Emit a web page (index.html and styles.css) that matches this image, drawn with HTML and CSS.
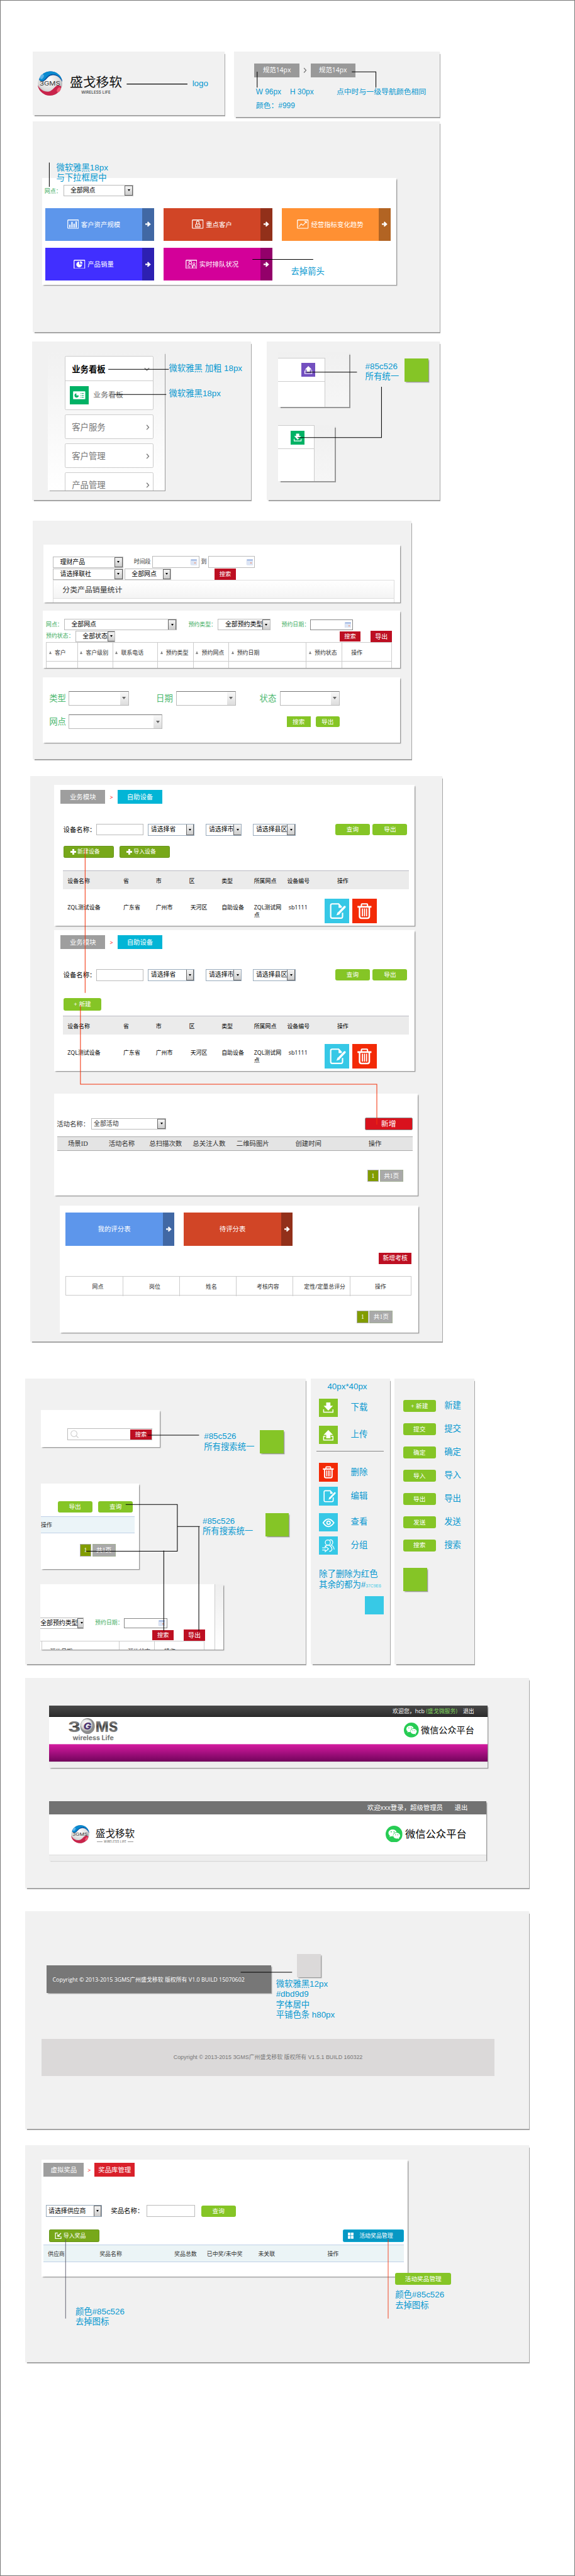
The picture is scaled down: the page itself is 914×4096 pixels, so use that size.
FILE: index.html
```html
<!DOCTYPE html>
<html lang="zh-CN">
<head>
<meta charset="utf-8">
<title>盛戈移软 界面规范</title>
<link rel="stylesheet" href="styles.css">
</head>
<body>
<svg class="defs" width="0" height="0" aria-hidden="true">
  <defs>
    <radialGradient id="silver" cx="45%" cy="35%" r="70%"><stop offset="0" stop-color="#fff"/><stop offset=".6" stop-color="#dcdcdc"/><stop offset="1" stop-color="#999"/></radialGradient>
    <linearGradient id="chrome" x1="0" y1="0" x2="0" y2="1"><stop offset="0" stop-color="#bbb"/><stop offset=".5" stop-color="#444"/><stop offset="1" stop-color="#aaa"/></linearGradient>
    <symbol id="ball" viewBox="0 0 53 53">
      <circle cx="26.5" cy="26.5" r="26" fill="url(#silver)"/>
      <path d="M3 18C9 2 24-2 36 2 46 6 52 14 53 24 48 14 40 8 31 9 19 10 18 24 8 22 5 22 3 20 3 18Z" fill="#0a4c9a"/>
      <path d="M3 17C9 2 24-2 36 2 45 5 50 12 52 20 46 10 38 5 29 7 18 9 16 22 8 21 4 21 3 19 3 17Z" fill="#0a8bd0"/>
      <ellipse cx="9" cy="12" rx="3.5" ry="5.5" transform="rotate(30 9 12)" fill="#5fb3e8"/>
      <path d="M50 35C44 51 29 55 17 51 7 47 1 39 0 30 5 40 14 45 23 44 34 42 36 30 45 31 49 31 51 33 50 35Z" fill="#c9244b"/>
      <ellipse cx="45" cy="40" rx="3.5" ry="5.500" transform="rotate(30 45 40)" fill="#ee5b73"/>
      <text x="26" y="31" text-anchor="middle" font-family="Inter, sans-serif" font-size="11.500" textLength="44" lengthAdjust="spacingAndGlyphs" fill="#333">3GMS</text>
    </symbol>
    <symbol id="arrow" viewBox="0 0 12 12"><path d="M0 4.500h5.500L3.800 2.200 5.800.4 11.800 6 5.800 11.600 3.800 9.800 5.500 7.500H0z" fill="#fff"/></symbol>
    <symbol id="right" viewBox="0 0 8 12"><path d="M1.500 1 6 6 1.500 11" fill="none" stroke="#777" stroke-width="1.800"/></symbol>
    <symbol id="down" viewBox="0 0 12 8"><path d="M1 1.500 6 6.500 11 1.500" fill="none" stroke="#777" stroke-width="1.800"/></symbol>
    <symbol id="bars" viewBox="0 0 25 20"><rect x="1" y="1" width="23" height="18" rx="1" fill="none" stroke="#fff" stroke-width="1.700"/><path d="M5.500 17V11M10 17V5M14.500 17V9M19 17V4" stroke="#fff" stroke-width="2.600"/></symbol>
    <symbol id="vip" viewBox="0 0 25 20"><rect x="1" y="1" width="23" height="18" rx="1" fill="none" stroke="#fff" stroke-width="1.700"/><path d="M8 16V11l2-1.500V6a2.700 2.700 0 0 1 5.400 0V9.500L17.500 11V16Z" fill="none" stroke="#fff" stroke-width="1.600"/><path d="M10 9.500h6M12.700 11v3" stroke="#fff" stroke-width="1.500"/></symbol>
    <symbol id="trend" viewBox="0 0 25 20"><rect x="1" y="1" width="23" height="18" rx="1" fill="none" stroke="#fff" stroke-width="1.700"/><path d="M4 15.500 9 9.500 13 12.500 20 4.500M16 4.500H20.500V8" fill="none" stroke="#fff" stroke-width="1.500"/></symbol>
    <symbol id="pie" viewBox="0 0 25 20"><rect x="1" y="1" width="23" height="18" rx="1" fill="none" stroke="#fff" stroke-width="1.700"/><path d="M12 4A6.200 6.200 0 1 0 18.200 10.200H12Z" fill="#fff"/><path d="M14 3V8.500H19A5.500 5.500 0 0 0 14 3Z" fill="#fff"/></symbol>
    <symbol id="queue" viewBox="0 0 25 20"><rect x="1" y="1" width="23" height="18" rx="1" fill="none" stroke="#fff" stroke-width="1.700"/><circle cx="10" cy="6" r="3" fill="none" stroke="#fff" stroke-width="1.400"/><circle cx="18" cy="8.500" r="2.200" fill="none" stroke="#fff" stroke-width="1.300"/><path d="M5.500 18V12L8.500 9.500M14 18V12L11.500 9.500M9 18V13M16 18V13L17.500 11 20.500 12.500V18" fill="none" stroke="#fff" stroke-width="1.400"/></symbol>
    <symbol id="download" viewBox="0 0 40 40"><path d="M15.500 8h9v7h5.500L20 25.500 10 15h5.500z" fill="#fff"/><path d="M10 23V29H30V23" fill="none" stroke="#fff" stroke-width="2"/></symbol>
    <symbol id="upload" viewBox="0 0 40 40"><path d="M15.500 27h9V19.500H30L20 9 10 19.500h5.500z" fill="#fff"/><path d="M14 23H10V30.500H30V23H26" fill="none" stroke="#fff" stroke-width="2"/></symbol>
    <symbol id="trash" viewBox="0 0 40 40"><path d="M15 13V9.500Q15 8.500 16 8.500H24Q25 8.500 25 9.500V13" fill="none" stroke="#fff" stroke-width="2.200"/><path d="M8.500 13.300H31.500" stroke="#fff" stroke-width="2.800"/><path d="M12 14V29Q12 32 15 32H25Q28 32 28 29V14" fill="none" stroke="#fff" stroke-width="2.600"/><path d="M16.500 16V29M20 16V29M23.500 16V29" stroke="#fff" stroke-width="2"/></symbol>
    <symbol id="edit" viewBox="0 0 40 40"><path d="M30.500 23V29Q30.500 32 28 32H13.500Q11 32 11 29V11Q11 8.500 13.500 8.500H24L29 14" fill="none" stroke="#fff" stroke-width="2.200"/><path d="M24 8.500V15H29.500z" fill="#fff"/><path d="M34 13.500 24.500 23.500" stroke="#fff" stroke-width="3.600" stroke-linecap="round"/><path d="M22.500 22 26 25.500 20.500 27.500z" fill="#fff"/></symbol>
    <symbol id="eye" viewBox="0 0 40 40"><path d="M9 20.500Q20 4.500 32 20.500 20 37 9 20.500Z" fill="none" stroke="#fff" stroke-width="2.400"/><circle cx="20.500" cy="20.500" r="3.600" fill="none" stroke="#fff" stroke-width="2.400"/></symbol>
    <symbol id="group" viewBox="0 0 40 40"><circle cx="19" cy="13" r="5.500" fill="none" stroke="#fff" stroke-width="1.700"/><path d="M23 7.500C30 6 32 15 26 18.500 30 20 32 23 32.500 28M13 22Q15 18.500 19 18.500 27 19.500 28 28M22 31.500Q25 33 28 28M7 24.500H13.500V21L20.500 26.500 13.500 32.500V29H7" fill="none" stroke="#fff" stroke-width="1.700"/></symbol>
    <symbol id="board" viewBox="0 0 40 40"><rect x="7" y="11" width="26" height="17" rx="1" fill="#fff"/><path d="M14 15.500A4.500 4.500 0 1 0 19 20H14Z" fill="#00b265"/><path d="M23 15.500H30M23 19.500H30M23 23.500H30" stroke="#00b265" stroke-width="1.500" stroke-dasharray="1.500 1 6"/></symbol>
    <symbol id="calendar" viewBox="0 0 14 13"><rect x=".5" y=".5" width="13" height="12" rx="1" fill="#eef2fb" stroke="#b9c8e6"/><rect x="1" y="1" width="12" height="2.500" fill="#9db6e2"/><path d="M4 4v8M7 4v8M10 4v8M1 6.500h12M1 9.500h12" stroke="#c5d2ec" stroke-width=".7"/><rect x="8" y="7" width="3" height="2.500" fill="#eca38c"/></symbol>
    <symbol id="wechat" viewBox="0 0 36 36"><circle cx="18" cy="18" r="18" fill="#27cc54"/><path d="M15 8C9.500 8 6 11.500 6 15.500 6 18 7.200 20 9.200 21.300L8.300 24.200 11.700 22.500 15 23 16 22C15 17.500 18.500 13.800 23.500 14 22.800 10.300 19.300 8 15 8Z" fill="#fff"/><path d="M23.500 15C19 15 16.300 18 16.300 21.200 16.300 24.800 19.500 27.500 23.500 27.500L26 27.200 28.800 28.600 28.100 26.100C30 25 31 23.200 31 21.200 31 18 28 15 23.500 15Z" fill="#fff"/><g fill="#27cc54"><circle cx="12" cy="13" r="1.200"/><circle cx="18" cy="13" r="1.200"/><circle cx="21.300" cy="19.500" r="1"/><circle cx="26" cy="19.500" r="1"/></g></symbol>
  </defs>
</svg>

<main class="page">

  <div class="band">
    <section class="panel p-logo">
      <div class="brand">
        <svg class="brand-ball"><use href="#ball"/></svg>
        <div class="brand-words"><b>盛戈移软</b><span>WIRELESS LIFE</span></div>
      </div>
      <svg class="leaders" viewBox="70 110 410 136"><path d="M271 179.500H401"/></svg>
      <p class="note n-logo">logo</p>
    </section>
    <section class="panel p-crumb">
      <div class="spec-crumbs"><span>规范14px</span><svg><use href="#right"/></svg><span>规范14px</span></div>
      <div class="spec-notes"><p>W 96px</p><p>H 30px</p><p>点中时与一级导航颜色相同</p><p>颜色：#999</p></div>
      <svg class="leaders" viewBox="500 110 440 140"><path d="M549.500 153V187M752 153.500H803.500V187"/></svg>
    </section>
  </div>

  <section class="panel p-tiles">
    <div class="card c-tiles">
      <div class="tile-filter"><label class="green">网点：</label><div class="select pad25">全部网点<i></i></div></div>
      <div class="tiles">
        <a class="tile blue"><span><svg><use href="#bars"/></svg>客户资产规模</span><em><svg><use href="#arrow"/></svg></em></a>
        <a class="tile red"><span><svg><use href="#vip"/></svg>重点客户</span><em><svg><use href="#arrow"/></svg></em></a>
        <a class="tile orange"><span><svg><use href="#trend"/></svg>经营指标变化趋势</span><em><svg><use href="#arrow"/></svg></em></a>
        <a class="tile indigo"><span><svg><use href="#pie"/></svg>产品销量</span><em><svg><use href="#arrow"/></svg></em></a>
        <a class="tile magenta"><span><svg><use href="#queue"/></svg>实时排队状况</span><em><svg><use href="#arrow"/></svg></em></a>
      </div>
    </div>
    <svg class="leaders" viewBox="70 260 870 450"><path d="M105.500 348V400M540 555.500H670"/></svg>
    <p class="note n-font">微软雅黑18px<br>与下拉框居中</p>
    <p class="note n-arrow">去掉箭头</p>
  </section>

  <div class="band band-menu">
    <section class="panel p-menu">
      <div class="menu-card">
        <div class="menu-group">
          <div class="menu-item open">业务看板<svg class="chev-down"><use href="#down"/></svg></div>
          <div class="menu-sub"><svg><use href="#board"/></svg>业务看板</div>
        </div>
        <div class="menu-group menu-item">客户服务<svg><use href="#right"/></svg></div>
        <div class="menu-group menu-item">客户管理<svg><use href="#right"/></svg></div>
        <div class="menu-group menu-item">产品管理<svg><use href="#right"/></svg></div>
      </div>
      <svg class="leaders" viewBox="68 730 468 340"><path d="M231 789.500H360.500M244 843.500H355"/></svg>
      <p class="note n-bold">微软雅黑 加粗 18px</p>
      <p class="note n-regular">微软雅黑18px</p>
    </section>
    <section class="panel p-io">
      <div class="corner corner-up"><div class="sheet"><div class="sheet-top"><svg class="purple"><use href="#upload"/></svg></div></div></div>
      <div class="corner corner-down"><div class="sheet"><div class="sheet-top"><svg class="emerald"><use href="#download"/></svg></div></div></div>
      <svg class="leaders" viewBox="570 730 370 340"><path d="M655 795.500H763M636 935.500H815.500V827"/></svg>
      <p class="note n-io">#85c526<br>所有统一</p>
      <div class="swatch s-io"></div>
    </section>
  </div>

  <section class="panel p-filters">
    <div class="card f1">
      <div class="grid f1-a"><div class="select pad15">理财产品<i></i></div><span>时间段</span><div class="date"><svg><use href="#calendar"/></svg></div><span>到</span><div class="date"><svg><use href="#calendar"/></svg></div></div>
      <div class="grid f1-b"><div class="select pad15">请选择联社<i></i></div><div class="select pad15">全部网点<i></i></div><a class="btn-red">搜索</a></div>
      <div class="strip">分类产品销量统计</div>
      <div class="strip-next"></div>
    </div>
    <div class="card f2">
      <div class="grid f2-a"><label class="green">网点：</label><div class="select pad15">全部网点<i></i></div><label class="green">预约类型：</label><div class="select pad15">全部预约类型<i></i></div><label class="green">预约日期：</label><div class="date dark"><svg><use href="#calendar"/></svg></div></div>
      <div class="grid f2-b"><label class="green">预约状态：</label><div class="select pad15">全部状态<i></i></div><a class="btn-red small">搜索</a><a class="btn-red big">导出</a></div>
      <div class="cells sort"><span>客户</span><span>客户级别</span><span>联系电话</span><span>预约类型</span><span>预约网点</span><span>预约日期</span><span>预约状态</span><span class="plain">操作</span></div>
      <div class="cells empty"><span></span><span></span><span></span><span></span><span></span><span></span><span></span><span></span></div>
    </div>
    <div class="card f3">
      <div class="grid f3-a"><label>类型</label><div class="combo"><i></i></div><label>日期</label><div class="combo"><i></i></div><label>状态</label><div class="combo"><i></i></div></div>
      <div class="grid f3-b"><label>网点</label><div class="combo wide"><i></i></div><a class="btn square">搜索</a><a class="btn">导出</a></div>
    </div>
  </section>

  <section class="panel p-device">
    <div class="card device">
      <div class="crumbs"><span>业务模块</span><b>&gt;</b><span class="cyan">自助设备</span></div>
      <div class="grid dev-filter"><label>设备名称：</label><div class="input"></div><div class="select s1">请选择省<i></i></div><div class="select s2">请选择市<i></i></div><div class="select s3">请选择县区<i></i></div><a class="btn">查询</a><a class="btn">导出</a></div>
      <div class="dark-actions"><a><b></b>新建设备</a><a><b></b>导入设备</a></div>
      <div class="dev-head"><span>设备名称</span><span>省</span><span>市</span><span>区</span><span>类型</span><span>所属网点</span><span>设备编号</span><span class="op">操作</span></div>
      <div class="dev-row"><span>ZQL测试设备</span><span>广东省</span><span>广州市</span><span class="in">天河区</span><span>自助设备</span><span>ZQL测试网<br>点</span><span class="in">sb1111</span><div class="ops"><svg class="sky" viewBox="4 0 34 40"><use href="#edit" width="40" height="40"/></svg><svg class="scarlet" viewBox="3 0 34 40"><use href="#trash" width="40" height="40"/></svg></div></div>
    </div>
    <div class="card device second">
      <div class="crumbs"><span>业务模块</span><b>&gt;</b><span class="cyan">自助设备</span></div>
      <div class="grid dev-filter"><label>设备名称：</label><div class="input"></div><div class="select s1">请选择省<i></i></div><div class="select s2">请选择市<i></i></div><div class="select s3">请选择县区<i></i></div><a class="btn">查询</a><a class="btn">导出</a></div>
      <a class="btn new">+ 新建</a>
      <div class="dev-head"><span>设备名称</span><span>省</span><span>市</span><span>区</span><span>类型</span><span>所属网点</span><span>设备编号</span><span class="op">操作</span></div>
      <div class="dev-row"><span>ZQL测试设备</span><span>广东省</span><span>广州市</span><span class="in">天河区</span><span>自助设备</span><span>ZQL测试网<br>点</span><span class="in">sb1111</span><div class="ops"><svg class="sky" viewBox="4 0 34 40"><use href="#edit" width="40" height="40"/></svg><svg class="scarlet" viewBox="3 0 34 40"><use href="#trash" width="40" height="40"/></svg></div></div>
    </div>
    <div class="card activity">
      <div class="grid act-filter"><label>活动名称：</label><div class="select pad5">全部活动<i></i></div><a class="btn-add">新增</a></div>
      <div class="act-head"><span>场景ID</span><span>活动名称</span><span>总扫描次数</span><span>总关注人数</span><span>二维码图片</span><span>创建时间</span><span>操作</span></div>
      <div class="pager"><b>1</b><span>共1页</span></div>
    </div>
    <div class="card score">
      <div class="tiles two">
        <a class="tile blue"><span>我的评分表</span><em><svg><use href="#arrow"/></svg></em></a>
        <a class="tile red"><span>待评分表</span><em><svg><use href="#arrow"/></svg></em></a>
      </div>
      <a class="btn-red review">新增考核</a>
      <div class="score-table"><span>网点</span><span>岗位</span><span>姓名</span><span>考核内容</span><span>定性/定量总评分</span><span>操作</span></div>
      <div class="pager"><b>1</b><span>共1页</span></div>
    </div>
    <svg class="leaders hot" viewBox="64 1660 882 1210"><path d="M181.500 1817V2124M171.500 2150V2319.500H805.500V2406"/></svg>
  </section>

  <div class="band band-buttons">
    <section class="panel p-search">
      <div class="card h1"><div class="searchbox"><svg viewBox="0 0 18 18"><circle cx="7.500" cy="7.500" r="6.500"/><path d="M12 12 17 16.500"/></svg><a class="btn-red">搜索</a></div></div>
      <div class="card h2">
        <div class="h2-buttons"><a class="btn">导出</a><a class="btn">查询</a></div>
        <div class="h2-head">操作</div>
        <div class="pager"><b>1</b><span>共1页</span></div>
      </div>
      <div class="card h3"><div class="h3-sheet">
        <div class="grid h3-a"><div class="select">全部预约类型<i></i></div><label class="green">预约日期：</label><div class="date dark"><svg><use href="#calendar"/></svg></div></div>
        <div class="h3-b"><a class="btn-red">搜索</a><a class="btn-red big">导出</a></div>
        <div class="h3-cells"><span></span><span class="tri">预约日期</span><span class="tri">预约状态</span><span>操作</span></div>
      </div></div>
      <svg class="leaders" viewBox="54 2950 600 610"><path d="M316 3071H426M269 3219.500H379.500V3319.500H184M379.500 3266.500H427.500M425.500 3266V3490M350.500 3318V3490"/></svg>
      <p class="note n-s1">#85c526<br>所有搜索统一</p>
      <div class="swatch s-s1"></div>
      <p class="note n-s2">#85c526<br>所有搜索统一</p>
      <div class="swatch s-s2"></div>
    </section>
    <section class="panel p-icons">
      <p class="size">40px*40px</p>
      <div class="icon-row"><svg class="lime"><use href="#download"/></svg>下载</div>
      <div class="icon-row r2"><svg class="lime"><use href="#upload"/></svg>上传</div>
      <hr>
      <div class="icon-row"><svg class="scarlet"><use href="#trash"/></svg>删除</div>
      <div class="icon-row r4"><svg class="sky"><use href="#edit"/></svg>编辑</div>
      <div class="icon-row r5"><svg class="sky"><use href="#eye"/></svg>查看</div>
      <div class="icon-row r6"><svg class="sky"><use href="#group"/></svg>分组</div>
      <p class="rule">除了删除为红色<br>其余的都为#<small>37C9E6</small></p>
      <div class="sky-box"></div>
    </section>
    <section class="panel p-actions">
      <div class="action"><a class="btn">+ 新建</a>新建</div>
      <div class="action"><a class="btn">提交</a>提交</div>
      <div class="action"><a class="btn">确定</a>确定</div>
      <div class="action"><a class="btn">导入</a>导入</div>
      <div class="action"><a class="btn">导出</a>导出</div>
      <div class="action"><a class="btn">发送</a>发送</div>
      <div class="action"><a class="btn">搜索</a>搜索</div>
      <div class="swatch flow"></div>
    </section>
  </div>

  <section class="panel p-headers">
    <div class="card k1">
      <div class="k1-bar"><span>欢迎您，hcb <em>(盛戈微服务)</em></span><span>退出</span></div>
      <div class="k1-main">
        <svg class="old-logo" viewBox="0 0 107 50"><g font-family="Inter, sans-serif" font-weight="800"><ellipse cx="42" cy="17" rx="15.500" ry="17" fill="#8d8d8d"/><ellipse cx="40" cy="15" rx="12.500" ry="13" fill="url(#silver)"/><text x="0" y="29" font-size="30" textLength="27" lengthAdjust="spacingAndGlyphs" fill="url(#chrome)">3</text><text x="59" y="29" font-size="30" textLength="48" lengthAdjust="spacingAndGlyphs" fill="url(#chrome)">MS</text><text x="33" y="24" font-style="italic" font-size="20" textLength="17" lengthAdjust="spacingAndGlyphs" fill="#4b3470">G</text><text x="10" y="47" font-weight="700" font-size="14" textLength="88" lengthAdjust="spacingAndGlyphs" fill="#777">wireless Life</text></g></svg>
        <div class="wechat"><svg><use href="#wechat"/></svg>微信公众平台</div>
      </div>
      <div class="k1-nav"></div>
      <div class="k-foot"></div>
    </div>
    <div class="card k2">
      <div class="k2-bar"><span>欢迎xxx登录，超级管理员</span><span>退出</span></div>
      <div class="k2-main">
        <div class="brand mini"><svg class="brand-ball"><use href="#ball"/></svg><div class="brand-words"><b>盛戈移软</b><span>WIRELESS LIFE</span></div></div>
        <div class="wechat"><svg><use href="#wechat"/></svg>微信公众平台</div>
      </div>
      <div class="k-foot"></div>
    </div>
  </section>

  <section class="panel p-footer">
    <div class="foot-row"><div class="foot-old">Copyright © 2013-2015 3GMS广州盛戈移软 版权所有 V1.0 BUILD 15070602</div><div class="foot-swatch"></div></div>
    <div class="foot-new">Copyright © 2013-2015 3GMS广州盛戈移软 版权所有 V1.5.1 BUILD 160322</div>
    <svg class="leaders" viewBox="54 4090 1077 465"><path d="M515 4220.500H625"/></svg>
    <p class="note n-foot">微软雅黑12px<br>#dbd9d9<br>字体居中<br>平铺色条 h80px</p>
  </section>

  <section class="panel p-prize">
    <div class="card prize">
      <div class="crumbs"><span>虚拟奖品</span><b>&gt;</b><span class="crimson">奖品库管理</span></div>
      <div class="grid prize-filter"><div class="select pad5">请选择供应商<i></i></div><label>奖品名称：</label><div class="input"></div><a class="btn">查询</a></div>
      <div class="prize-actions">
        <a class="import"><svg viewBox="0 0 14 14"><path d="M6 1H1V13H13V8M13 1 6 8M6 3.500V8H11"/></svg>导入奖品</a>
        <a class="manage"><svg viewBox="0 0 12 13"><path d="M0 0H5.500V6H0zM6.500 0H12V6H6.500zM0 7H5.500V13H0zM6.500 7H12V13H6.500z"/></svg>活动奖品管理</a>
      </div>
      <div class="prize-head"><span>供应商</span><span>奖品名称</span><span>奖品总数</span><span>已中奖/未中奖</span><span>未关联</span><span>操作</span></div>
    </div>
    <svg class="leaders thin" viewBox="54 4590 1077 465"><path d="M140.500 4791V4961"/><path class="hot-line" d="M830.500 4791V4961"/></svg>
    <a class="btn float-btn">活动奖品管理</a>
    <p class="note n-p1">颜色#85c526<br>去掉图标</p>
    <p class="note n-p2">颜色#85c526<br>去掉图标</p>
  </section>
</main>
</body>
</html>
```
FILE: styles.css
```css
* { box-sizing: border-box; }
html, body { margin: 0; background: #fff; }
body { overflow-x: hidden; }
p { margin: 0; }
.defs { position: absolute; }

/* The board is authored on a 1230px canvas and shown at reduced scale. */
.page {
  zoom: 0.7431;
  width: 1230px;
  height: 5512px;
  border: 1px solid #777;
  padding-top: 109px;
  font: 12px/1 "Open Sans", "Noto Sans CJK SC", sans-serif;
  color: #333;
  white-space: nowrap;
  overflow: hidden;
}
.page svg { display: block; flex: none; }

/* ---------- shared ---------- */
.band { display: flex; align-items: flex-start; }
.panel { position: relative; background: #f1f1f1; box-shadow: 2px 3px 1px #a5a5a5; display: flow-root; }
.card { background: #fff; box-shadow: 3px 3px 2px #999; display: flow-root; }
.grid { display: grid; align-items: center; justify-items: start; }
.leaders { position: absolute; inset: 0; width: 100%; height: 100%; fill: none; stroke: #000; stroke-width: 1.400; pointer-events: none; }
.leaders.hot, .hot-line { stroke: #f3330c; }
.leaders.thin { stroke-width: 1.200; }
.leaders.thin path:first-child { stroke: #556; }
.note, .size, .rule, .spec-notes, .icon-row, .action {
  font-family: "Liberation Sans", "Noto Sans CJK SC", sans-serif;
  font-size: 18px; line-height: 22px; color: #0798d0;
}
.note { position: absolute; }
.swatch { position: absolute; width: 51px; height: 50px; background: #85c526; box-shadow: 3px 3px 2px #999; }
.swatch.flow { position: static; }
.green { color: #3fae63; }

.select { position: relative; display: flex; align-items: center; justify-content: space-between; height: 24px; border: 1px solid #bbb; background: #fff; color: #000; font-size: 13.300px; padding-left: 5px; overflow: hidden; }
.select i { flex: none; width: 17px; height: 22px; border: 1px solid #666; background: linear-gradient(#f4f4f4, #ccc); display: grid; place-items: center; }
.select i::after { content: ""; border: 4px solid transparent; border-top: 5px solid #000; border-bottom: 0; }
.pad15 { padding-left: 14px; }
.pad25 { padding-left: 14px; }
.pad5 { padding-left: 4px; }
.date, .input { border: 1px solid #bbb; background: #fff; height: 25px; width: 100px; }
.date { display: flex; align-items: center; justify-content: flex-end; padding-right: 3px; }
.date svg { width: 14px; height: 13px; }
.date.dark { border-color: #888; width: 92px; height: 22px; }
.btn { display: grid; place-items: center; height: 24px; width: 74px; border-radius: 4px; background: #85c526; color: #fff; font-size: 13px; }
.btn-red { display: grid; place-items: center; width: 45px; height: 24px; background: #bd0f22; color: #fff; font-size: 12.500px; }
.crumbs { display: flex; font-size: 14px; color: #fff; }
.crumbs span { width: 96px; height: 30px; display: grid; place-items: center; background: #9e9e9e; }
.crumbs b { width: 26px; font: 12px/32px "Open Sans", sans-serif; color: #f00; text-align: center; }
.crumbs .cyan { background: #02b5d6; }
.crumbs .crimson { background: #d9202a; }
.pager { display: flex; gap: 2px; height: 26px; color: #fff; font: 13px/24px "Liberation Serif", "Noto Sans CJK SC", serif; text-align: center; }
.pager b { width: 25px; background: #819c00; border: 1px solid #aaa; font-weight: 400; }
.pager span { width: 50px; background: #a9a9a9; border: 1px solid #a3af96; }
.lime { background: #85c526; }
.sky { background: #36c8e6; }
.scarlet { background: #f32a06; }

/* ---------- logo / breadcrumb spec ---------- */
.p-logo { width: 410px; height: 136px; margin-left: 69px; }
.p-crumb { width: 440px; height: 140px; margin-left: 20px; }
.brand { display: flex; margin: 42px 0 0 10px; }
.brand-ball { width: 53px; height: 53px; }
.brand-words { margin-left: 15px; width: 114px; display: flex; flex-direction: column; align-items: center; color: #111; }
.brand-words b { font-size: 28px; line-height: 30px; margin-top: 8px; font-weight: 400; }
.brand-words span { font: 8.500px/10px Inter, sans-serif; letter-spacing: .1px; margin: 3px 0 0 0; }
.n-logo { left: 341px; top: 58px; }
.spec-crumbs { display: flex; align-items: center; margin: 25px 0 0 44px; }
.spec-crumbs span { width: 96px; height: 30px; display: grid; place-items: center; background: #999; color: #fff; font-size: 14px; }
.spec-crumbs svg { width: 8px; height: 13px; margin: 0 8px; }
.spec-notes { display: grid; grid-template-columns: 73px 99.500px auto; row-gap: 7px; margin: 21px 0 0 47px; font-size: 16px; }

/* ---------- tiles ---------- */
.p-tiles { width: 870px; height: 450px; margin: 10px 0 0 69px; }
.c-tiles { width: 757px; height: 229px; margin: 120px 0 0 20px; }
.tile-filter { display: flex; align-items: center; margin: 15px 0 0 5px; }
.tile-filter label { width: 40px; padding-top: 4px; }
.tile-filter .select { width: 150px; }
.tiles { display: grid; grid-template-columns: repeat(3, 233px); gap: 15px 20px; margin: 26px 0 0 6px; }
.tile { height: 70px; display: flex; color: #fff; font-size: 14px; }
.tile span { flex: 1; display: flex; align-items: center; justify-content: center; gap: 5px; }
.tile span svg { width: 25px; height: 20px; }
.tile em { width: 25px; display: grid; place-items: center; background: rgba(0, 0, 0, .3); }
.tile em svg { width: 12px; height: 12px; }
.blue { background: #5d96eb; }
.red { background: #d14526; }
.orange { background: #ff9033; }
.indigo { background: #412fff; }
.magenta { background: #d30099; }
.n-font { left: 50px; top: 88px; }
.n-arrow { left: 552px; top: 310px; }

/* ---------- side menu / upload ---------- */
.band-menu { margin-top: 20px; }
.p-menu { width: 468px; height: 340px; margin-left: 67px; }
.p-io { width: 370px; height: 340px; margin-left: 34px; }
.menu-card { width: 250px; height: 296px; margin: 23px 0 0 34px; padding: 9px 0 0 36px; overflow: hidden; background: linear-gradient(#f1f1f1, #fff); box-shadow: 2px 2px 1px #999; }
.menu-group { width: 190px; margin-bottom: 10px; border: 1px solid #ccc; border-radius: 3px; background: #fff; }
.menu-item { height: 52px; display: flex; align-items: center; justify-content: space-between; padding: 3px 7px 0 14px; font-size: 18px; color: #777; }
.menu-item svg { width: 8px; height: 12px; }
.menu-item .chev-down { width: 12px; height: 8px; }
.menu-item.open { font-weight: 700; color: #000; border-bottom: 1px solid #ccc; }
.menu-sub { display: flex; align-items: center; height: 60px; padding-left: 10px; gap: 10px; font-size: 16px; color: #666; }
.menu-sub svg { width: 40px; height: 40px; background: #00b265; }
.n-bold { left: 293px; top: 47px; }
.n-regular { left: 293px; top: 101px; }
.corner { margin-left: 24px; background: linear-gradient(#f0f0f0, #f6f6f6); box-shadow: 3px 3px 1px #999; display: flow-root; overflow: hidden; }
.corner-up { width: 153px; height: 117px; margin-top: 23px; }
.corner-down { width: 121px; height: 119px; margin-top: 40px; }
.sheet { background: #fff; border: solid #ccc; border-width: 1px 1px 0 0; width: 78px; height: 119px; }
.corner-up .sheet { margin-top: 13px; width: 101px; border-top-width: 2px; }
.sheet-top { height: 49px; border-bottom: 1px solid #ccc; padding: 10px 0 0 27px; }
.corner-up .sheet-top { padding: 9px 0 0 50px; }
.sheet-top svg { width: 30px; height: 30px; }
.purple { background: #7350c0; }
.emerald { background: #00b265; }
.n-io { left: 211px; top: 43px; }
.s-io { left: 295px; top: 37px; }

/* ---------- filter forms ---------- */
.p-filters { width: 810px; height: 510px; margin: 44px 0 0 69px; }
.f1 { width: 762px; height: 124px; margin: 51px 0 0 23px; }
.f1-a, .f1-b { margin-left: 20px; height: 24px; }
.f1-a { grid-template-columns: 173px 40px 103.500px 15.500px 100px; margin-top: 25px; }
.f1-a .select, .f1-b .select:first-child { width: 150px; }
.f1-b { grid-template-columns: 153px 193px 45px; margin-top: 2px; }
.f1-b .select { width: 100px; }
.strip { margin: 0 0 0 20px; width: 731px; height: 41px; border: 1px solid #ddd; background: linear-gradient(#fff, #f4f4f4); padding-left: 19px; font-size: 16px; line-height: 40px; }
.strip-next { margin-left: 20px; width: 731px; height: 8px; border: solid #ddd; border-width: 0 1px; }
.f2 { width: 764px; height: 122px; margin: 18px 0 0 21px; }
.f2-a, .f2-b { margin-left: 7px; height: 25px; }
.f2-a { grid-template-columns: 39px 265.700px 63.300px 136px 61px 92px; margin-top: 17px; }
.f2-a .select { width: 241px; }
.f2-a label + .select:nth-child(4) { width: 113px; }
.f2-b { grid-template-columns: 63px 565px 67px 45px; }
.f2-b .select { width: 85px; }
.small { height: 22px; }
.big { height: 25px; font-size: 13.500px; }
.cells { display: grid; grid-template-columns: 66.600px 75.400px 96px 76.500px 75.500px 166px 76.600px 107.400px; margin-left: 7px; width: 740px; height: 42px; border: 1px solid #ccc; border-left: 0; line-height: 42px; }
.cells span { border-left: 1px solid #ccc; display: flex; align-items: center; gap: 7px; padding-left: 5px; }
.sort span::before { content: ""; border: 4px solid transparent; border-bottom: 7px solid #888; border-top: 0; }
.sort .plain::before { display: none; }
.sort .plain { padding-left: 19px; }
.empty { height: 13px; border-width: 0 1px 0 0; }
.f3 { width: 764px; height: 140px; margin: 20px 0 0 21px; }
.f3 label { font-size: 18px; color: #4db870; }
.f3-a, .f3-b { margin-left: 14px; height: 30px; }
.f3-a { grid-template-columns: 42px 186.600px 42.400px 179px 43px 128px; margin-top: 30px; }
.f3-b { grid-template-columns: 42px 466px 62px 51px; margin-top: 20px; }
.f3 .btn { width: 51px; height: 22px; }
.f3 .square { border-radius: 0; }
.combo { width: 128px; height: 30px; border: 1px solid #bbb; border-top: 2px solid #777; display: flex; justify-content: flex-end; }
.combo.wide { width: 200px; }
.combo i { width: 17px; background: linear-gradient(#f9f9f9, #ddd); display: grid; place-items: center; }
.combo i::after { content: ""; border: 5px solid transparent; border-top: 6px solid #666; border-bottom: 0; }

/* ---------- device management ---------- */
.p-device { width: 882px; height: 1210px; margin: 36px 0 0 63px; }
.device { width: 770px; height: 301px; margin: 19px 0 0 52px; color: #000; }
.device.second { margin-top: 10px; }
.device .crumbs { margin: 11px 0 0 13px; }
.dev-filter { grid-template-columns: 71px 110px 124px 101px 176px 80px 74px; margin: 40px 0 0 19px; height: 25px; }
.dev-filter label { font-size: 14px; }
.dev-filter .select { height: 26px; font-size: 13.300px; border-color: #9ab; }
.dev-filter .select i { height: 24px; }
.s1 { width: 100px; }
.s2 { width: 77px; }
.s3 { width: 91px; }
.dark-actions { display: flex; gap: 12px; margin: 23px 0 0 19px; }
.dark-actions a { width: 108px; height: 26px; border: 1px solid #66951a; border-radius: 3px; background: #77a81a; color: #fff; display: flex; align-items: center; gap: 3px; padding-left: 14px; }
.dark-actions b { width: 12px; height: 12px; background: linear-gradient(#fff, #fff) center / 4px 12px no-repeat, linear-gradient(#fff, #fff) center / 12px 4px no-repeat; }
.btn.new { width: 80px; height: 26px; margin: 38px 0 0 20px; }
.dev-head, .dev-row { display: grid; grid-template-columns: 119.600px 69.400px 71px 69.700px 69.300px 71px 80px auto; margin-left: 18px; width: 740px; padding-left: 10px; }
.dev-head { height: 41px; margin-top: 26px; border-top: 1px solid #bbbbc4; background: #ebebeb; line-height: 43px; }
.second .dev-head { margin-top: 11px; }
.dev-head .op { padding-left: 27px; }
.dev-row { line-height: 17px; padding-top: 30px; height: 79px; }
.dev-row .in { padding-left: 3px; }
.ops { display: flex; gap: 8px; margin-top: -10px; }
.ops svg { width: 52px; height: 52px; }
.activity { width: 777px; height: 218px; margin: 49px 0 0 52px; }
.act-filter { grid-template-columns: 74px 585px 102px; margin: 51px 0 0 5px; height: 27px; font-size: 14px; }
.act-filter .select { width: 160px; color: #333; }
.btn-add { width: 102px; height: 27px; background: #d9121d; border: 1px solid #888; border-radius: 3px; display: grid; place-items: center; color: #fff; font-size: 16px; }
.act-head { display: grid; grid-template-columns: 87px 87px 93px 93.500px 126px 156.500px auto; margin: 13px 0 0 6px; padding-left: 23px; width: 760px; height: 32px; border: solid #aaa; border-width: 1px 0; background: #e4e4e4; font: 14px/30px "Liberation Serif", "Noto Sans CJK SC", serif; }
.activity .pager { margin: 40px 0 0 669px; }
.score { width: 766px; height: 271px; margin: 22px 0 0 64px; }
.two { grid-template-columns: 233px 233px; margin: 15px 0 0 12px; }
.review { width: 70px; height: 25px; margin: 15px 0 0 682px; font-size: 13.300px; }
.score-table { display: grid; grid-template-columns: 121px 121.500px 120.500px 121.600px 121.400px auto; margin: 25px 0 0 12px; width: 740px; height: 42px; border: 1px solid #ccc; line-height: 42px; text-align: center; }
.score-table span { padding-left: 14px; }
.score-table span + span { border-left: 1px solid #ccc; }
.score-table span:last-child { padding-left: 0; }
.score .pager { margin: 33px 0 0 635px; }

/* ---------- search / icon / action buttons ---------- */
.band-buttons { margin-top: 80px; }
.p-search { width: 600px; height: 610px; margin-left: 53px; }
.p-icons { width: 170px; height: 610px; margin-left: 10px; }
.p-actions { width: 170px; height: 610px; margin-left: 10px; padding-top: 45px; }
.h1 { width: 254px; height: 79px; margin: 67px 0 0 33px; }
.searchbox { width: 182px; height: 26px; margin: 39px 0 0 57px; border: 1px solid #bbb; display: flex; align-items: center; justify-content: space-between; padding: 0 1px 0 5px; }
.searchbox svg { width: 18px; height: 18px; fill: none; stroke: #ccc; stroke-width: 1.400; }
.searchbox .btn-red { height: 22px; }
.h2 { width: 210px; height: 184px; margin: 78px 0 0 33px; }
.h2-buttons { display: flex; gap: 13px; margin: 38px 0 0 36px; }
.h2-head { width: 200px; height: 37px; margin-top: 8px; border: solid #bfd0e8; border-width: 1px 0; background: #ebf4f8; line-height: 36px; }
.h2 .pager { margin: 23px 0 0 83px; }
.h3 { width: 392px; height: 140px; margin: 32px 0 0 32px; background: linear-gradient(#eee, #fff); }
.h3-sheet { width: 374px; height: 140px; background: #fff; border-right: 2px solid #ccc; overflow: hidden; display: flow-root; }
.h3-a { grid-template-columns: 117px 62px 92px; margin-top: 71px; height: 24px; }
.h3-a .select { width: 93px; padding-left: 0; border-left: 0; }
.h3-b { display: flex; gap: 22px; margin: 1px 0 0 240px; height: 25px; align-items: center; }
.h3-b .btn-red { height: 22px; }
.h3-b .big { height: 25px; }
.h3-cells { display: grid; grid-template-columns: 2px 166.500px 75px 107px; width: 351px; height: 42px; border-top: 1px solid #ccc; border-right: 1px solid #ccc; line-height: 42px; }
.h3-cells span + span { border-left: 1px solid #ccc; padding-left: 20px; }
.h3-cells .tri::before { content: ""; display: inline-block; margin: 0 7px 1px -15px; border: 4px solid transparent; border-bottom: 7px solid #888; border-top: 0; }
.n-s1 { left: 382px; top: 113px; }
.s-s1 { left: 501px; top: 110px; }
.n-s2 { left: 379px; top: 294px; }
.s-s2 { left: 513px; top: 288px; }
.size { padding-left: 36px; margin-top: 6px; }
.icon-row { display: flex; align-items: center; gap: 28px; margin: 14px 0 0 18px; height: 40px; }
.icon-row svg { width: 40px; height: 40px; }
.icon-row.r2 { margin-top: 18px; }
.icon-row.r4 { margin-top: 11px; }
.icon-row.r5 { margin-top: 16px; }
.icon-row.r6 { margin-top: 10px; }
.p-icons hr { width: 144px; height: 1px; margin: 15px 0 24px 12px; border: 0; background: #888; }
.p-icons hr + .icon-row { margin-top: 0; }
.rule { margin: 31px 0 0 18px; }
.rule small { font-size: 9px; letter-spacing: .1px; color: #37c9e6; }
.sky-box { width: 40px; height: 40px; margin: 10px 0 0 116px; background: #37c9e6; }
.action { display: flex; align-items: center; gap: 18px; height: 26px; margin: 0 0 23.800px 18px; }
.action .btn { width: 70px; height: 26px; font-family: "Open Sans", "Noto Sans CJK SC", sans-serif; line-height: 1; }
.flow { margin: 35px 0 0 18px; }
.action:nth-last-child(2) { margin-bottom: 0; }

/* ---------- page headers ---------- */
.p-headers { width: 1077px; height: 450px; margin: 30px 0 0 53px; }
.k1 { width: 939px; height: 133px; margin: 59px 0 0 50px; }
.k1-bar { height: 25px; background: linear-gradient(#484848, #2e2e2e); border-bottom: 1px solid #111; display: flex; justify-content: flex-end; gap: 12px; padding-right: 29px; line-height: 24px; color: #fff; }
.k1-bar em { font-style: normal; color: #7fd45c; }
.k1-main { height: 58px; display: flex; justify-content: space-between; padding: 3px 29px 0 41px; }
.old-logo { width: 107px; height: 50px; }
.wechat { display: flex; align-items: center; height: 34px; gap: 4px; margin-top: 8px; font-size: 19px; color: #000; }
.wechat svg { width: 32px; height: 32px; }
.k1-nav { height: 37px; border-top: 1px solid #e070c0; background: linear-gradient(#d31a9f, #72045c); }
.k-foot { height: 13px; background: #eee; border-top: 1px solid #ddd; }
.k2 { width: 936px; height: 126px; margin: 72px 0 0 50px; }
.k2-bar { height: 28px; background: #727272; color: #fff; display: flex; justify-content: flex-end; gap: 25px; padding-right: 40px; font-size: 14px; line-height: 29px; }
.k2-main { height: 87px; display: flex; justify-content: space-between; align-items: flex-start; padding: 24px 42px 0 48px; }
.k2-main .wechat { margin: 0; height: 36px; font-size: 22px; gap: 5px; }
.k2-main .wechat svg { width: 36px; height: 36px; }
.brand.mini { margin: -1px 0 0; }
.mini .brand-ball { width: 39px; height: 39px; }
.mini .brand-words { width: 86px; margin-left: 12px; }
.mini .brand-words b { font-size: 21px; line-height: 22px; margin-top: 7px; }
.mini .brand-words span { display: flex; align-items: center; gap: 3px; font-size: 6px; line-height: 8px; letter-spacing: .4px; color: #555; }
.mini .brand-words span::before, .mini .brand-words span::after { content: ""; width: 12px; height: 1px; background: #999; }

/* ---------- page footer ---------- */
.p-footer { width: 1077px; height: 465px; margin: 50px 0 0 53px; }
.foot-row { display: flex; align-items: flex-start; margin: 91px 0 0 45px; height: 84px; }
.foot-old { width: 481px; height: 60px; margin-top: 24px; background: #777; box-shadow: 3px 3px 2px #999; color: #fff; padding-left: 13px; line-height: 62px; }
.foot-swatch { width: 51px; height: 50px; margin-left: 55px; background: #dbd9d9; box-shadow: 3px 3px 2px #999; }
.foot-new { width: 970px; height: 80px; margin: 97px 0 0 34px; background: #dbd9d9; color: #777; text-align: center; font: 12px/80px "Liberation Sans", "Noto Sans CJK SC", sans-serif; }
.n-foot { left: 536px; top: 145px; }

/* ---------- prize management ---------- */
.p-prize { width: 1077px; height: 465px; margin: 35px 0 0 53px; }
.prize { width: 784px; height: 251px; margin: 31px 0 0 34px; }
.prize .crumbs { margin: 7px 0 0 5px; }
.prize .crumbs span { width: 86px; }
.prize .crumbs b { width: 23px; }
.prize-filter { grid-template-columns: 139px 76px 117px 74px; margin: 58px 0 0 10px; height: 25px; color: #000; }
.prize-filter label { font-size: 14px; }
.prize-filter .select { width: 120px; height: 26px; border-color: #9ab; }
.prize-filter .select i { height: 24px; }
.prize-filter .input { width: 104px; }
.prize-actions { display: flex; justify-content: space-between; align-items: center; margin: 27px 9px 0 16px; height: 28px; color: #fff; }
.prize-actions a { display: flex; align-items: center; }
.import { width: 108px; height: 26px; padding-left: 11px; gap: 4px; border: 1px solid #66951a; border-radius: 3px; background: #77a81a; }
.import svg { width: 15px; height: 14px; fill: none; stroke: #fff; stroke-width: 1.700; }
.manage { width: 130px; height: 28px; padding-left: 10px; gap: 12px; border: 2px solid #0ba9d4; border-radius: 3px; background: #0798c4; }
.manage svg { width: 12px; height: 13px; fill: #fff; }
.prize-head { display: grid; grid-template-columns: 110.600px 160px 69.500px 110px 148px auto; margin: 5px 0 0 5px; padding-left: 9px; width: 770px; height: 37px; border: solid #bfd0e8; border-width: 1px 0; background: #ebf4f6; line-height: 37px; }
.float-btn { position: absolute; left: 791px; top: 273px; width: 120px; height: 26px; }
.n-p1 { left: 107px; top: 346px; }
.n-p2 { left: 791px; top: 310px; }
```
